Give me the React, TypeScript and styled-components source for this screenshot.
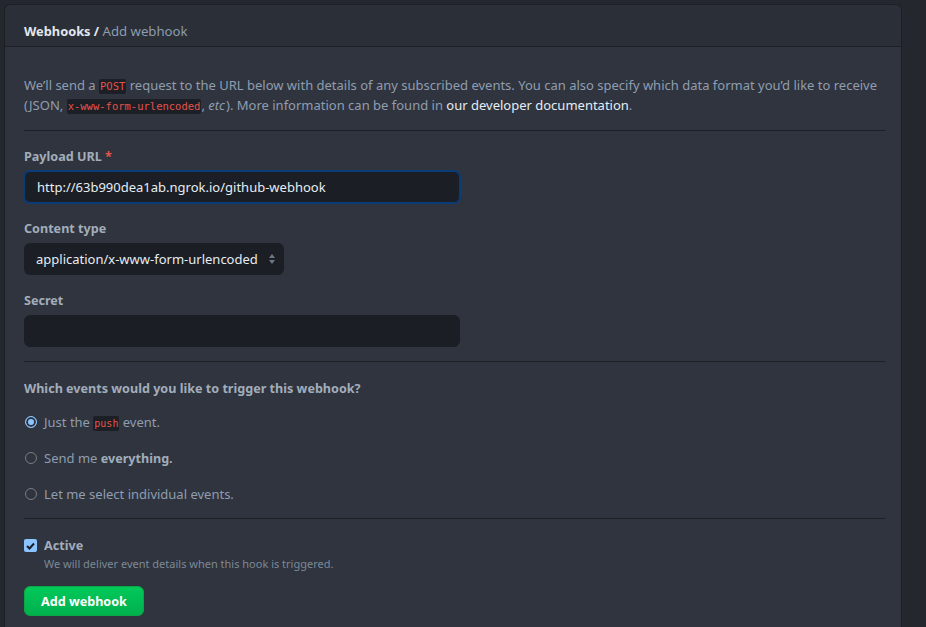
import styled, { createGlobalStyle } from 'styled-components';

const GlobalStyle = createGlobalStyle`
  html, body {
    margin: 0;
    padding: 0;
    background: #24272e;
  }
  body {
    font-family: "Noto Sans", "Liberation Sans", sans-serif;
    font-size: 13px;
    color: #8f9db0;
  }
`

const Page = styled.div`
  width: 926px;
  height: 627px;
  box-sizing: border-box;
  padding: 4px 24px 0 4px;
  overflow: hidden;
`

const Panel = styled.div`
  border: 1px solid #1c1f24;
  border-bottom: none;
  border-radius: 6px 6px 0 0;
  background: #2f343e;
  min-height: 640px;
`

const Header = styled.div`
  background: #2a2f38;
  border-radius: 6px 6px 0 0;
  border-bottom: 1px solid #1c1f24;
  height: 42px;
  box-sizing: border-box;
  padding: 16px 19px 0;
  line-height: 20px;
  font-weight: 700;
  font-size: 12.8px;
  color: #e3e7ed;
`

const Crumb = styled.span`
  color: #8e9cae;
  font-weight: 400;
  font-size: 13.2px;
`

const Body = styled.div`
  padding: 28px 16px 0 19px;
`

const Intro = styled.p`
  margin: 0;
  line-height: 20px;
`

const Code = styled.code<{ small?: boolean }>`
  display: inline-block;
  font-family: "DejaVu Sans Mono", "Liberation Mono", monospace;
  font-size: ${p => (p.small ? '10px' : '10.5px')};
  line-height: 15px;
  color: #e5534b;
  background: #1c1f25;
  padding: 0 1px;
  border-radius: 2px;
`

const Link = styled.a`
  color: #e6edf3;
  text-decoration: none;
`

const Em = styled.i`
  padding-right: 1px;
`

const Divider = styled.hr<{ top: number; bottom: number }>`
  border: none;
  border-top: 1px solid #1c1f24;
  margin: ${p => p.top}px 0 ${p => p.bottom}px;
`

const Field = styled.div`
  display: flex;
  flex-direction: column;
  align-items: flex-start;
  margin-bottom: 16px;
`

const Label = styled.label`
  font-weight: 700;
  font-size: 12.6px;
  color: #a2adbb;
  line-height: 20px;
  margin-bottom: 4px;
`

const Required = styled.span`
  color: #e5534b;
`

const Input = styled.input<{ focused?: boolean }>`
  box-sizing: border-box;
  width: 436px;
  height: 32px;
  padding: 0 12px;
  background: #1b1e25;
  border: 1px solid ${p => (p.focused ? '#0a3c78' : '#1b1e25')};
  box-shadow: ${p => (p.focused ? '0 0 0 1px #0a3c78' : 'none')};
  border-radius: 6px;
  color: #e6edf3;
  font-family: inherit;
  font-size: 13px;
  outline: none;
`

const Select = styled.div`
  box-sizing: border-box;
  height: 32px;
  padding: 0 8px 0 12px;
  background: #1b1e25;
  border-radius: 6px;
  display: flex;
  align-items: center;
  gap: 10px;
  color: #e6edf3;
  font-size: 13px;
`

const Question = styled.div`
  font-weight: 700;
  color: #a2adbb;
  font-size: 12.6px;
  line-height: 20px;
  margin-bottom: 13px;
`

const Options = styled.div`
  display: flex;
  flex-direction: column;
  gap: 16px;
`

const Option = styled.label`
  display: flex;
  align-items: center;
  gap: 7px;
  height: 20px;
  line-height: 20px;
  color: #8f9db0;
`

const Radio = styled.span<{ checked?: boolean }>`
  box-sizing: border-box;
  width: 12px;
  height: 12px;
  margin-left: 1px;
  border-radius: 50%;
  border: 1px solid ${p => (p.checked ? '#8cc4ff' : '#777c84')};
  background: ${p => (p.checked ? '#8cc4ff' : '#2f343e')};
  box-shadow: ${p => (p.checked ? 'inset 0 0 0 2px #2f343e' : 'none')};
  flex: none;
`

const Strong = styled.b`
  color: #a2adbb;
  font-size: 12.6px;
`

const CheckRow = styled.div`
  display: flex;
  align-items: flex-start;
  gap: 7px;
`

const Box = styled.span`
  width: 13px;
  height: 13px;
  border-radius: 2px;
  background: #8cc4ff;
  display: flex;
  align-items: center;
  justify-content: center;
  margin-top: 3px;
  flex: none;
`

const CheckText = styled.div`
  display: flex;
  flex-direction: column;
`

const CheckTitle = styled.span`
  font-weight: 700;
  color: #a2adbb;
  font-size: 12.6px;
  line-height: 20px;
`

const Note = styled.span`
  font-size: 11px;
  color: #7d8897;
  line-height: 15px;
`

const Button = styled.button`
  margin-top: 15px;
  height: 30px;
  padding: 0 16px;
  border: 1px solid #0aa845;
  border-radius: 6px;
  background: linear-gradient(#02c95a, #00b04d);
  color: #fff;
  font-family: inherit;
  font-weight: 700;
  font-size: 12.6px;
`

export default function App() {
  return (
    <>
      <GlobalStyle />
      <Page>
        <Panel>
          <Header>
            Webhooks / <Crumb>Add webhook</Crumb>
          </Header>
          <Body>
            <Intro>
              We’ll send a <Code>POST</Code> request to the URL below with details of any subscribed events. You can
              also specify which data format you’d like to receive (JSON, <Code>x-www-form-urlencoded</Code>,{' '}
              <Em>etc</Em>). More information can be found in <Link>our developer documentation</Link>.
            </Intro>
            <Divider top={15} bottom={16} />
            <Field>
              <Label>
                Payload URL <Required>*</Required>
              </Label>
              <Input focused readOnly value="http://63b990dea1ab.ngrok.io/github-webhook" />
            </Field>
            <Field>
              <Label>Content type</Label>
              <Select>
                application/x-www-form-urlencoded
                <svg width="8" height="12" viewBox="0 0 8 12">
                  <path d="M4 1 L7 5 H1 Z M4 11 L7 7 H1 Z" fill="#6e7681" />
                </svg>
              </Select>
            </Field>
            <Field>
              <Label>Secret</Label>
              <Input readOnly value="" />
            </Field>
            <Divider top={-2} bottom={17} />
            <Question>Which events would you like to trigger this webhook?</Question>
            <Options>
              <Option>
                <Radio checked />
                <span>
                  Just the <Code small>push</Code> event.
                </span>
              </Option>
              <Option>
                <Radio />
                <span>
                  Send me <Strong>everything.</Strong>
                </span>
              </Option>
              <Option>
                <Radio />
                <span>Let me select individual events.</span>
              </Option>
            </Options>
            <Divider top={14} bottom={17} />
            <CheckRow>
              <Box>
                <svg width="9" height="8" viewBox="0 0 9 8">
                  <path d="M1 4 L3.5 6.5 L8 1.5" stroke="#1b1e25" strokeWidth="2" fill="none" />
                </svg>
              </Box>
              <CheckText>
                <CheckTitle>Active</CheckTitle>
                <Note>We will deliver event details when this hook is triggered.</Note>
              </CheckText>
            </CheckRow>
            <Button>Add webhook</Button>
          </Body>
        </Panel>
      </Page>
    </>
  )
}
